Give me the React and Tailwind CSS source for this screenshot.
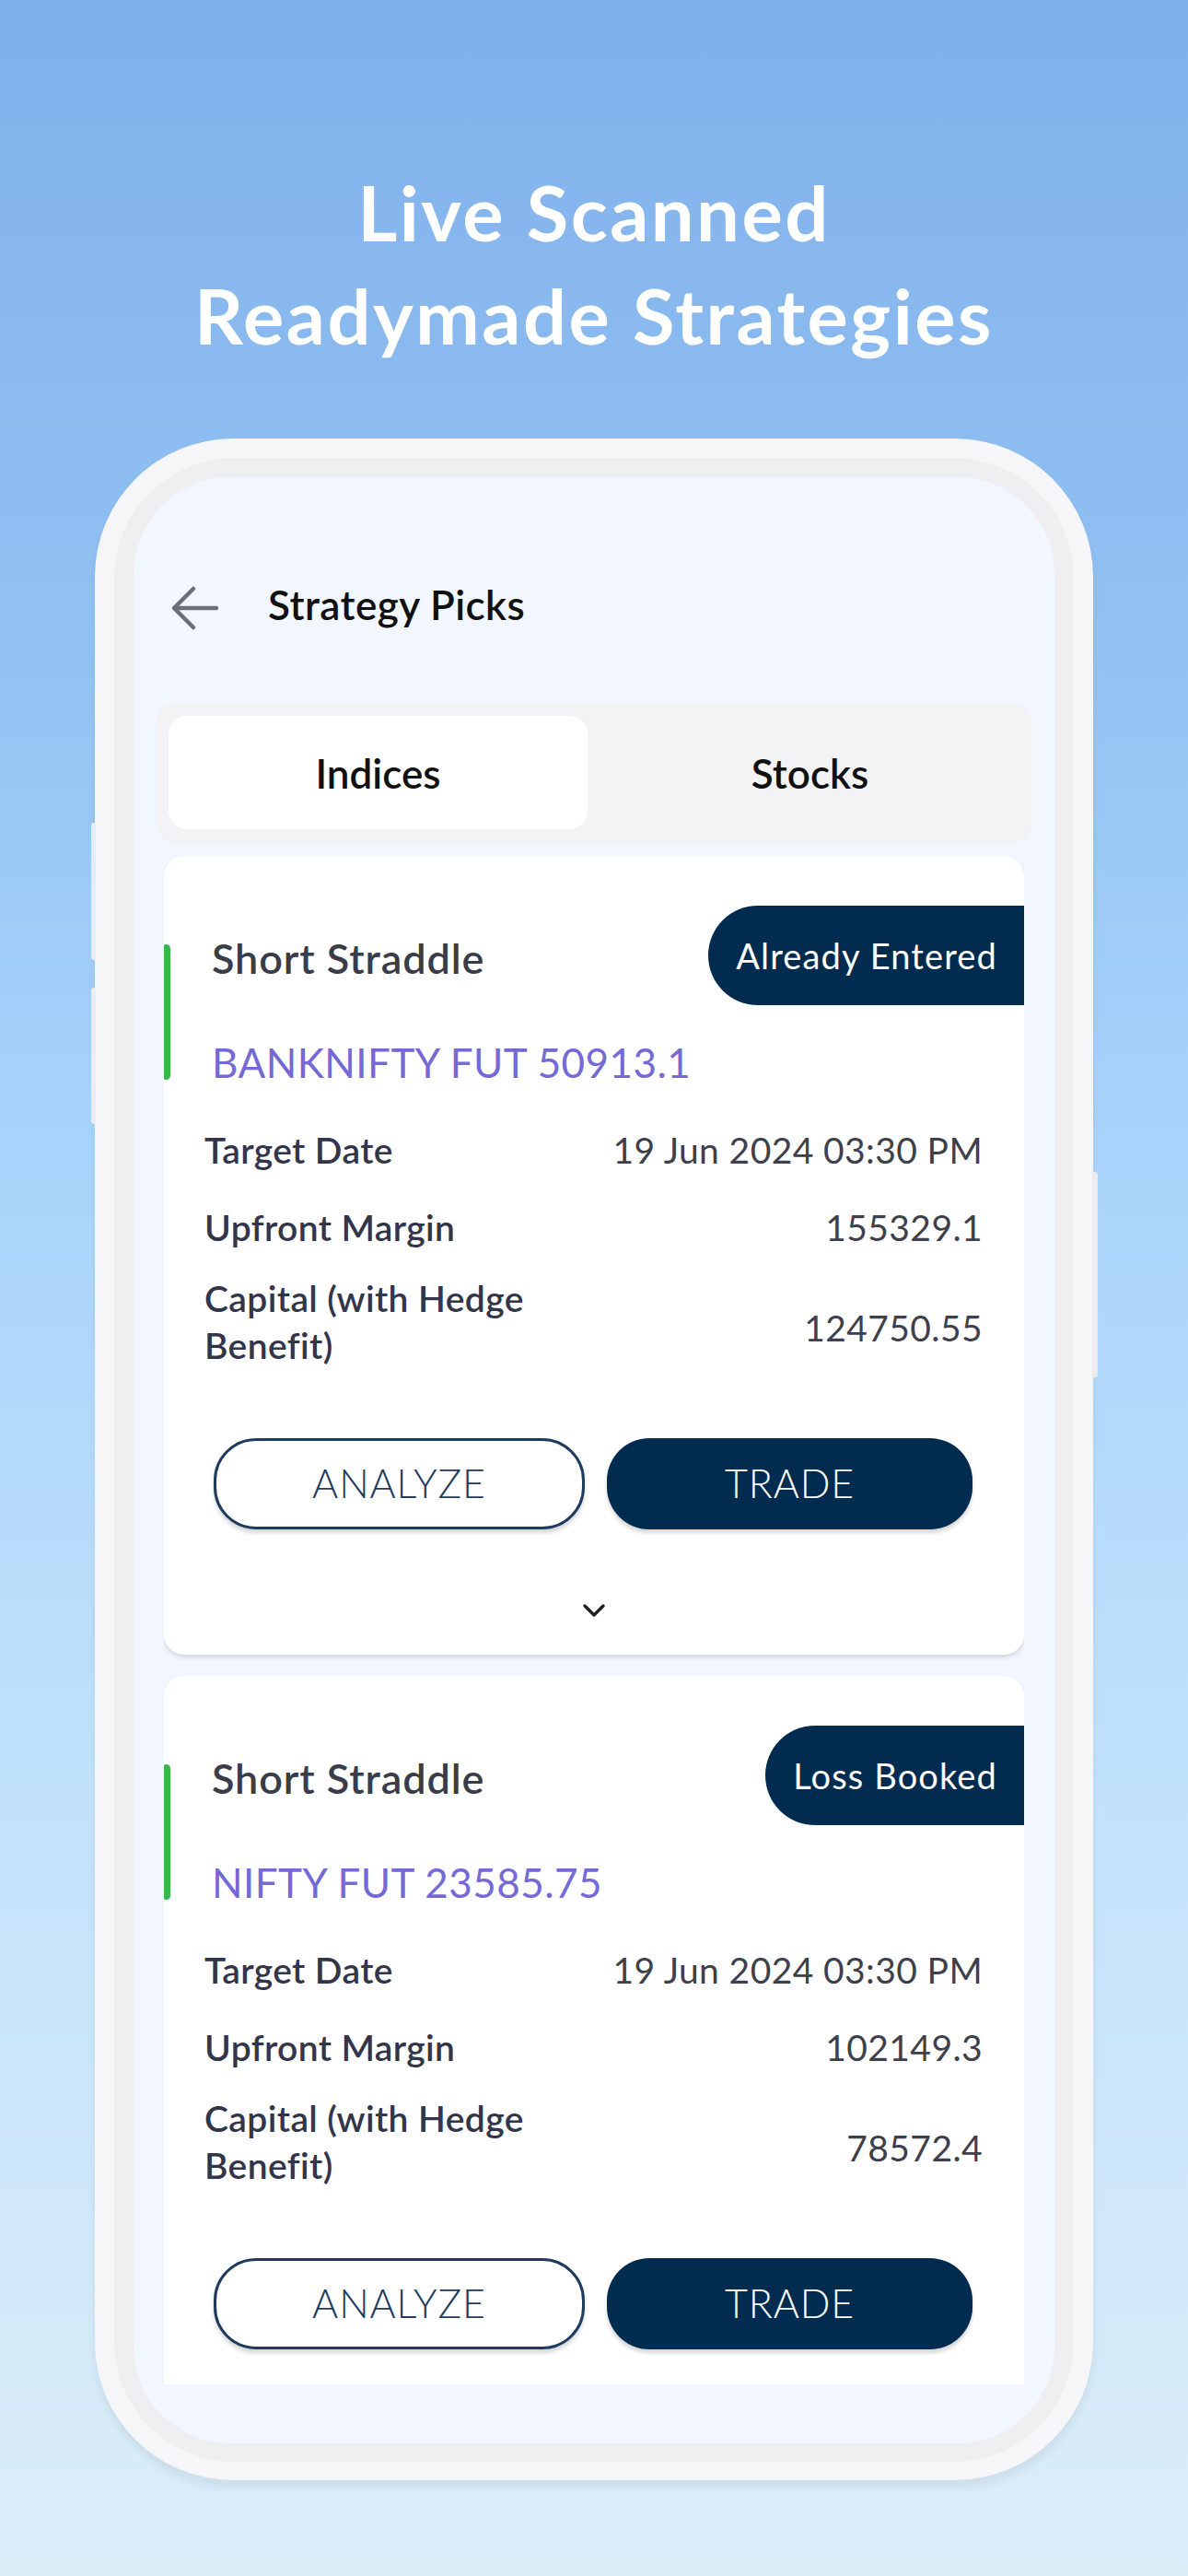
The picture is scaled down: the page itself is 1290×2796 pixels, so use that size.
import React from 'react';

const picks = [
  {
    id: 'banknifty',
    strategy: 'Short Straddle',
    status: 'Already Entered',
    symbol: 'BANKNIFTY FUT 50913.1',
    target: '19 Jun 2024 03:30 PM',
    margin: '155329.1',
    capital: '124750.55',
  },
  {
    id: 'nifty',
    strategy: 'Short Straddle',
    status: 'Loss Booked',
    symbol: 'NIFTY FUT 23585.75',
    target: '19 Jun 2024 03:30 PM',
    margin: '102149.3',
    capital: '78572.4',
  },
];

function BackArrow() {
  return (
    <svg width="54" height="50" viewBox="0 0 54 50" fill="none">
      <path
        d="M50 25H5M25 4L4 25l21 21"
        stroke="#6c6f79"
        strokeWidth="4.5"
        strokeLinecap="round"
        strokeLinejoin="round"
      />
    </svg>
  );
}

function Chevron() {
  return (
    <svg width="26" height="16" viewBox="0 0 26 16" fill="none">
      <path d="M3 3l10 10L23 3" stroke="#222" strokeWidth="3.5" strokeLinecap="round" strokeLinejoin="round" />
    </svg>
  );
}

function PickCard({ pick }) {
  return (
    <div className="relative shrink-0 rounded-[22px] bg-white shadow-[0_3px_5px_rgba(0,0,0,0.13)]">
      <span className="absolute left-[-2px] top-[96px] h-[147px] w-[9px] rounded-full bg-[#36b84b]" />

      <div className="flex items-center justify-between pt-[54px]">
        <h3 className="pl-[52px] pt-[5px] text-[45px] font-semibold leading-[54px] tracking-[0.02em] text-[#3a3c48]">
          {pick.strategy}
        </h3>
        <span className="flex h-[108px] items-center rounded-l-full bg-[#012b4f] pl-[30px] pr-[29px] text-[38px] tracking-[0.03em] text-white">
          {pick.status}
        </span>
      </div>

      <p className="mt-[37px] pl-[52px] text-[44px] leading-[50px] tracking-[0.01em] text-[#7469d6]">{pick.symbol}</p>

      <div className="pl-[44px] pr-[45px] text-[39px] leading-[50px] tracking-[0.01em]">
        <div className="mt-[45px] flex items-center justify-between">
          <span className="font-semibold text-[#33354a]">Target Date</span>
          <span className="text-[#3e404c]">{pick.target}</span>
        </div>
        <div className="mt-[34px] flex items-center justify-between">
          <span className="font-semibold text-[#33354a]">Upfront Margin</span>
          <span className="text-[#3e404c]">{pick.margin}</span>
        </div>
        <div className="mt-[27px] flex items-center justify-between">
          <span className="font-semibold leading-[51px] text-[#33354a]">
            Capital (with Hedge
            <br />
            Benefit)
          </span>
          <span className="pt-[12px] text-[#3e404c]">{pick.capital}</span>
        </div>
      </div>

      <div className="mt-[75px] flex gap-[24px] pl-[54px] pr-[56px] text-[43px] font-light tracking-[0.02em]">
        <button className="flex h-[99px] flex-1 items-center justify-center rounded-[46px] border-[3px] border-[#1e3b5f] bg-white text-[#1e3b5f] shadow-[0_4px_4px_rgba(0,0,0,0.16)]">
          ANALYZE
        </button>
        <button className="flex h-[99px] flex-1 items-center justify-center rounded-[46px] bg-[#012b4f] text-white shadow-[0_4px_4px_rgba(0,0,0,0.16)]">
          TRADE
        </button>
      </div>

      <div className="flex justify-center pb-[40px] pt-[80px]">
        <Chevron />
      </div>
    </div>
  );
}

export default function App() {
  return (
    <div
      className="flex min-h-[2796px] w-full flex-col items-center bg-[linear-gradient(180deg,#7fb0ea_0%,#92c2f3_25%,#a9d4fb_45%,#c2e2fb_70%,#dcedf8_100%)]"
      style={{ fontFamily: 'Lato, "Noto Sans", sans-serif' }}
    >
      <h1 className="pt-[174px] text-center text-[83px] font-bold leading-[112px] tracking-[0.03em] text-white">
        Live Scanned
        <br />
        Readymade Strategies
      </h1>

      <div className="relative mt-[78px] w-[1084px] rounded-[150px] bg-[#f6f6f8] p-[21px] pb-[20px] shadow-[0_8px_10px_rgba(0,0,0,0.06)]">
        <span className="absolute left-[-4px] top-[417px] h-[149px] w-[5px] rounded-l-[3px] bg-[#ececef]" />
        <span className="absolute left-[-4px] top-[596px] h-[148px] w-[5px] rounded-l-[3px] bg-[#ececef]" />
        <span className="absolute right-[-5px] top-[796px] h-[223px] w-[6px] rounded-r-[3px] bg-[#ececef]" />

        <div className="rounded-[130px] bg-[#efeff2] p-[21px] pb-[20px]">
          <div className="flex h-[2134px] flex-col overflow-hidden rounded-[105px] bg-[#f2f6fe]">
            <div className="mt-[112px] flex h-[53px] items-center pl-[40px]">
              <span className="pt-[6px]">
                <BackArrow />
              </span>
              <span className="ml-[52px] text-[44px] font-semibold leading-[53px] tracking-[0.01em] text-[#111]">
                Strategy Picks
              </span>
            </div>

            <div className="mx-[24px] mt-[80px] grid grid-cols-2 gap-[14px] rounded-[22px] bg-[#f3f3f5] p-[14px] pb-[15px] text-[44px] font-semibold text-[#111]">
              <div className="flex h-[123px] items-center justify-center rounded-[20px] bg-white">Indices</div>
              <div className="flex h-[123px] items-center justify-center">Stocks</div>
            </div>

            <div className="mx-[33px] mt-[14px] flex h-[1659px] flex-col gap-[23px] overflow-hidden">
              {picks.map((pick) => (
                <PickCard key={pick.id} pick={pick} />
              ))}
            </div>
          </div>
        </div>
      </div>
    </div>
  );
}
